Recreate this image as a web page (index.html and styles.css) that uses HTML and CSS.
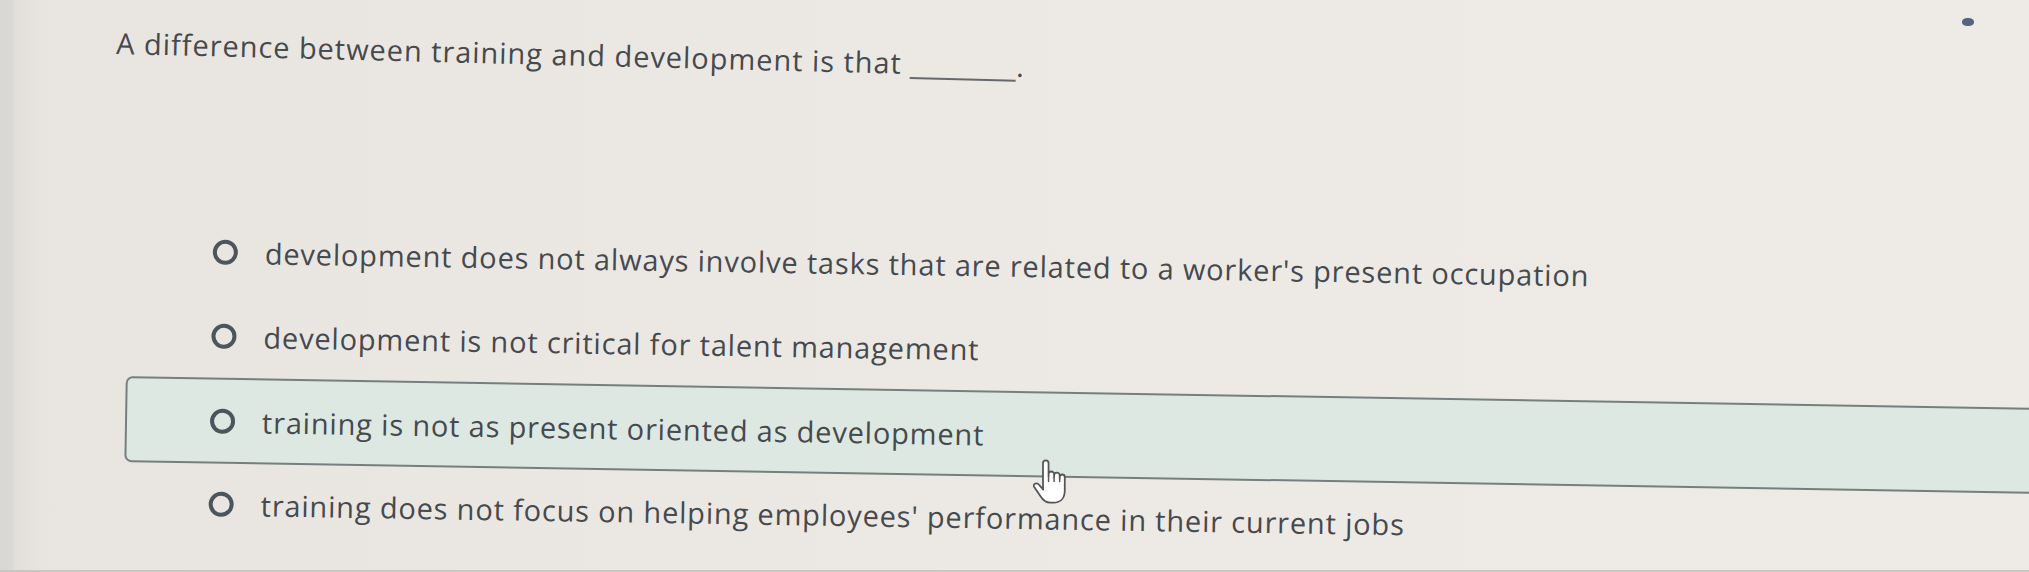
FILE: index.html
```html
<!DOCTYPE html>
<html lang="en">
<head>
<meta charset="utf-8">
<title>Question</title>
<link rel="stylesheet" href="styles.css">
</head>
<body>
<main class="quiz">
  <p class="question">A difference between training and development is that <span class="blank"></span>.</p>
  <ul class="options">
    <li class="option"><span class="radio"></span><span class="label">development does not always involve tasks that are related to a worker's present occupation</span></li>
    <li class="option"><span class="radio"></span><span class="label">development is not critical for talent management</span></li>
    <li class="option option--hover"><span class="radio"></span><span class="label">training is not as present oriented as development</span></li>
    <li class="option"><span class="radio"></span><span class="label">training does not focus on helping employees' performance in their current jobs</span></li>
  </ul>
</main>
<div class="cursor">
  <svg viewBox="0 0 36 44" width="40" height="49">
    <path d="M13.5 27 V5.5 a2.5 2.5 0 0 1 5 0 V17 V15.5 a2.5 2.5 0 0 1 5 0 V18 V16.5 a2.5 2.5 0 0 1 5 0 V19 V18 a2.3 2.3 0 0 1 4.6 0 V30 c0 7 -4 11 -10 11 h-3 c-4 0 -6.5 -2 -9 -6 l-5.5 -8 c-1 -1.6 0 -3.4 1.8 -3.4 c1.2 0 2 .6 2.8 1.6 l3.4 4 Z" fill="#ffffff" stroke="#555555" stroke-width="1.6" stroke-linejoin="round"/>
    <path d="M18.5 17 v5 M23.5 18 v4 M28.5 19 v3" stroke="#555555" stroke-width="1.3" fill="none" stroke-linecap="round"/>
  </svg>
</div>
<div class="camera-dot"></div>
</body>
</html>
```
FILE: styles.css
```css
html, body {
  margin: 0;
  padding: 0;
}

body {
  width: 100vw;
  height: 100vh;
  overflow: hidden;
  position: relative;
  font-family: "Open Sans", "Liberation Sans", sans-serif;
  color: #46494d;
  background:
    linear-gradient(to top, #c9c7c3 0, #c9c7c3 2px, rgba(0,0,0,0) 2px),
    linear-gradient(to right, #d9d7d3 0, #dad8d4 12px, #e2dfda 15px, #e8e5e0 40px, #eae7e2 400px, #edeae6 1200px, #eeebe7 100%);
}

.quiz {
  box-sizing: border-box;
  padding: 21px 0 0 117px;
  width: 100%;
  transform: rotate(0.95deg);
  transform-origin: 0 0;
}

.question {
  margin: 0;
  font-size: 29px;
  font-weight: 500;
  line-height: 40px;
  letter-spacing: 0.95px;
  color: #46494d;
  white-space: nowrap;
  transform: rotate(0.5deg);
  transform-origin: 0 50%;
}

.blank {
  display: inline-block;
  width: 106px;
  height: 2px;
  background: #66686b;
  vertical-align: -5px;
}

.options {
  list-style: none;
  margin: 145px 0 0 15px;
  padding: 0;
  width: calc(100% + 200px);
}

.option {
  box-sizing: border-box;
  height: 84px;
  display: flex;
  align-items: center;
  gap: 27px;
  padding-left: 83px;
  border: 2px solid transparent;
  border-radius: 7px;
}

.option--hover {
  height: 86px;
  margin-bottom: -2px;
  background: #dde8e2;
  border-color: #74807d;
}

.radio {
  flex: none;
  box-sizing: border-box;
  width: 25px;
  height: 25px;
  border: 4px solid #4c555d;
  border-radius: 50%;
}

.label {
  padding-top: 2px;
  font-size: 29px;
  font-weight: 500;
  line-height: 40px;
  letter-spacing: 0.82px;
  white-space: nowrap;
}

.cursor {
  position: absolute;
  left: 1028px;
  top: 457px;
  line-height: 0;
}

.camera-dot {
  position: absolute;
  left: 1962px;
  top: 18px;
  width: 12px;
  height: 8px;
  border-radius: 45%;
  background: #56657f;
}
```
